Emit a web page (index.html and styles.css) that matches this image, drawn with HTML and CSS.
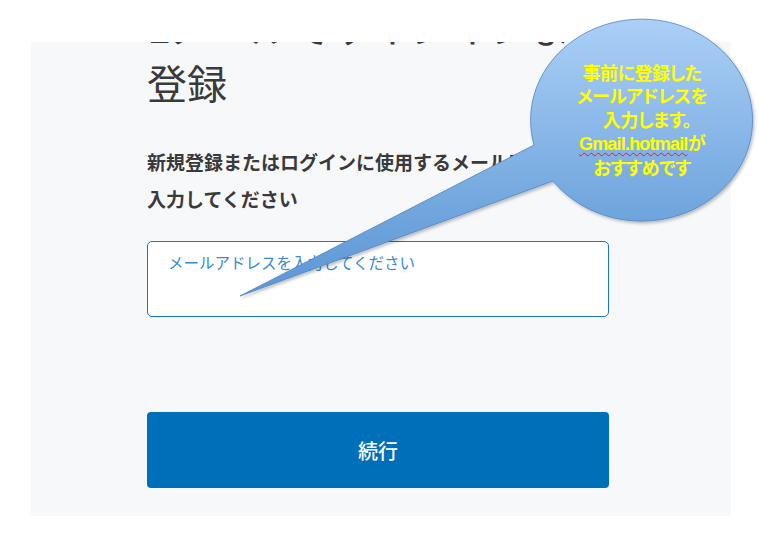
FILE: index.html
```html
<!DOCTYPE html>
<html lang="ja">
<head>
<meta charset="utf-8">
<title>登録</title>
<link rel="stylesheet" href="styles.css">
</head>
<body>
<main class="panel">
  <div class="content">
    <h1 class="title"><span class="title-line first">Eメールでサインインまたは</span><span class="title-line">登録</span></h1>
    <p class="lead">新規登録またはログインに使用するメールアドレスを入力してください</p>
    <textarea class="email" placeholder="メールアドレスを入力してください"></textarea>
    <button class="continue" type="button">続行</button>
  </div>
</main>
<div class="callout">
  <svg class="callout-shape" width="759" height="560" viewBox="0 0 759 560">
    <defs>
      <linearGradient id="cg" x1="0" y1="17" x2="0" y2="300" gradientUnits="userSpaceOnUse">
        <stop offset="0" stop-color="#acd0f7"/>
        <stop offset="0.7" stop-color="#6fa5dd"/>
        <stop offset="1" stop-color="#5b96d4"/>
      </linearGradient>
      <filter id="sh" x="-10%" y="-10%" width="130%" height="130%">
        <feDropShadow dx="1.5" dy="2" stdDeviation="1.5" flood-color="#000" flood-opacity="0.25"/>
      </filter>
    </defs>
    <path d="M240 296 L534 145 A111 101 0 1 1 553 181 Z" fill="url(#cg)" stroke="#4f84c2" stroke-width="0.8" filter="url(#sh)"/>
  </svg>
  <div class="callout-text">
    <div>事前に登録した</div>
    <div>メールアドレスを</div>
    <div class="indent">入力します。</div>
    <div><span class="squiggle">Gmail.hotmail</span>が</div>
    <div>おすすめです</div>
  </div>
</div>
</body>
</html>
```
FILE: styles.css
```css
html, body {
  margin: 0;
  padding: 0;
  background: #ffffff;
}
body {
  width: 759px;
  height: 560px;
  position: relative;
  overflow: hidden;
  font-family: "Noto Sans CJK JP", "Noto Sans", sans-serif;
  color: #333333;
}
.panel {
  display: block;
  margin: 42px 0 0 31px;
  width: 700px;
  height: 474px;
  background: #f7f8fa;
  overflow: hidden;
}
.content {
  width: 462px;
  margin-left: 116px;
  display: flex;
  flex-direction: column;
}
.title {
  margin: -41px 0 0 0;
  font-size: 40px;
  line-height: 50px;
  font-weight: 400;
  color: #3a3a3a;
}
.title-line {
  display: block;
  white-space: nowrap;
}
.title-line.first {
  margin-bottom: 6px;
}
.lead {
  margin: 36px 0 0 0;
  font-size: 19px;
  line-height: 37px;
  font-weight: 700;
  color: #3a3a3a;
}
.email {
  margin: 24px 0 0 0;
  box-sizing: border-box;
  width: 462px;
  height: 76px;
  border: 1px solid #1d74c0;
  border-radius: 5px;
  background: #ffffff;
  padding: 9px 20px;
  resize: none;
  font-family: "Noto Sans CJK JP", "Noto Sans", sans-serif;
  font-size: 15.5px;
  line-height: 22px;
  outline: none;
}
.email::placeholder {
  color: #3a8bd0;
  opacity: 1;
}
.continue {
  margin: 95px 0 0 0;
  width: 462px;
  height: 76px;
  border: none;
  border-radius: 4px;
  background: #006fba;
  color: #ffffff;
  font-family: "Noto Sans CJK JP", "Noto Sans", sans-serif;
  font-size: 20px;
  font-weight: 500;
  padding: 0;
}
.callout {
  position: absolute;
  left: 0;
  top: 0;
  width: 759px;
  height: 560px;
  pointer-events: none;
}
.callout-shape {
  position: absolute;
  left: 0;
  top: 0;
}
.callout-text {
  position: absolute;
  left: 555px;
  top: 61px;
  width: 174px;
  text-align: center;
  color: #ffff00;
  font-weight: 700;
  font-size: 18px;
  line-height: 23.3px;
  font-feature-settings: "palt";
  letter-spacing: -0.5px;
}
.indent {
  padding-left: 10px;
}
.squiggle {
  font-family: "Liberation Sans Narrow", "Liberation Sans", sans-serif;
  letter-spacing: -0.8px;
  text-decoration: underline wavy #e02020;
  text-decoration-thickness: 1px;
  text-underline-offset: 2px;
}
```
